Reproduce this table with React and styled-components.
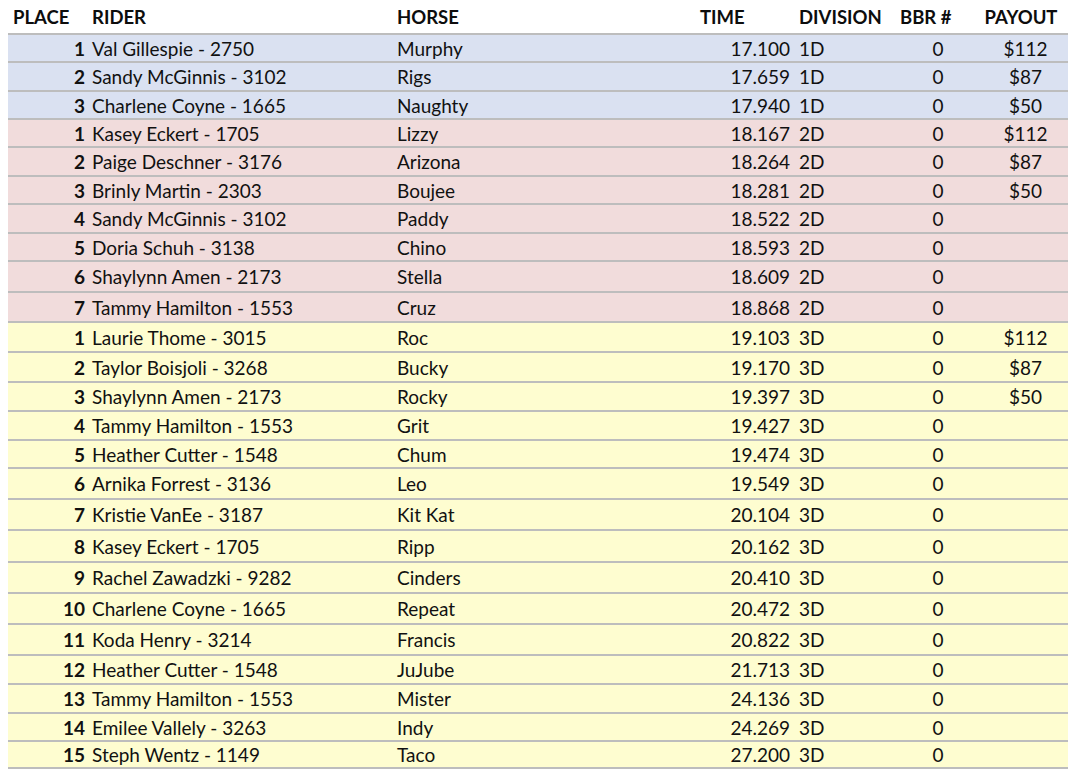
import React from 'react';
import styled, { createGlobalStyle } from 'styled-components';

const GlobalStyle = createGlobalStyle`
  html, body {
    margin: 0;
    padding: 0;
    background: #ffffff;
  }
  body {
    font-family: Lato, "Open Sans", "Liberation Sans", sans-serif;
    color: #111111;
  }
`;

const groupColors = {
  '1D': '#dae1f1',
  '2D': '#f1dcdc',
  '3D': '#fefdd0',
};

// row heights in px (border included), read from the reference
const rows = [
  [1, 'Val Gillespie - 2750', 'Murphy', '17.100', '1D', '$112', 28],
  [2, 'Sandy McGinnis - 3102', 'Rigs', '17.659', '1D', '$87', 29],
  [3, 'Charlene Coyne - 1665', 'Naughty', '17.940', '1D', '$50', 28],
  [1, 'Kasey Eckert - 1705', 'Lizzy', '18.167', '2D', '$112', 28],
  [2, 'Paige Deschner - 3176', 'Arizona', '18.264', '2D', '$87', 29],
  [3, 'Brinly Martin - 2303', 'Boujee', '18.281', '2D', '$50', 28],
  [4, 'Sandy McGinnis - 3102', 'Paddy', '18.522', '2D', '', 29],
  [5, 'Doria Schuh - 3138', 'Chino', '18.593', '2D', '', 28],
  [6, 'Shaylynn Amen - 2173', 'Stella', '18.609', '2D', '', 31],
  [7, 'Tammy Hamilton - 1553', 'Cruz', '18.868', '2D', '', 30],
  [1, 'Laurie Thome - 3015', 'Roc', '19.103', '3D', '$112', 30],
  [2, 'Taylor Boisjoli - 3268', 'Bucky', '19.170', '3D', '$87', 30],
  [3, 'Shaylynn Amen - 2173', 'Rocky', '19.397', '3D', '$50', 29],
  [4, 'Tammy Hamilton - 1553', 'Grit', '19.427', '3D', '', 29],
  [5, 'Heather Cutter - 1548', 'Chum', '19.474', '3D', '', 28],
  [6, 'Arnika Forrest - 3136', 'Leo', '19.549', '3D', '', 31],
  [7, 'Kristie VanEe - 3187', 'Kit Kat', '20.104', '3D', '', 31],
  [8, 'Kasey Eckert - 1705', 'Ripp', '20.162', '3D', '', 32],
  [9, 'Rachel Zawadzki - 9282', 'Cinders', '20.410', '3D', '', 31],
  [10, 'Charlene Coyne - 1665', 'Repeat', '20.472', '3D', '', 31],
  [11, 'Koda Henry - 3214', 'Francis', '20.822', '3D', '', 31],
  [12, 'Heather Cutter - 1548', 'JuJube', '21.713', '3D', '', 29],
  [13, 'Tammy Hamilton - 1553', 'Mister', '24.136', '3D', '', 29],
  [14, 'Emilee Vallely - 3263', 'Indy', '24.269', '3D', '', 28],
  [15, 'Steph Wentz - 1149', 'Taco', '27.200', '3D', '', 27],
];

const App = () => (
  <>
    <GlobalStyle />
    <Sheet>
      <HeaderRow>
        <HeadCell>PLACE</HeadCell>
        <HeadCell $pad="4px">RIDER</HeadCell>
        <HeadCell $pad="4px">HORSE</HeadCell>
        <HeadCell $pad="4px">TIME</HeadCell>
        <HeadCell $pad="5px">DIVISION</HeadCell>
        <HeadCell $pad="4px">BBR #</HeadCell>
        <HeadCell $pad="0" $align="center">PAYOUT</HeadCell>
      </HeaderRow>

      {rows.map(([place, rider, horse, time, div, payout, h], key) => (
        <Row key={key} $bg={groupColors[div]} $h={h}>
          <PlaceCell>{place}</PlaceCell>
          <TextCell>{rider}</TextCell>
          <TextCell>{horse}</TextCell>
          <TimeCell>{time}</TimeCell>
          <TextCell $pad="5px">{div}</TextCell>
          <CenterCell>0</CenterCell>
          <CenterCell $shift="3px">{payout}</CenterCell>
        </Row>
      ))}
    </Sheet>
  </>
);

const columns = '80px 305px 303px 98px 102px 84px 88px';

const Sheet = styled.div`
  width: 1060px;
  padding-left: 8px;
  font-size: 19px;
`;

const HeaderRow = styled.div`
  display: grid;
  grid-template-columns: ${columns};
  height: 35px;
  box-sizing: border-box;
  padding-top: 1px;
  align-items: center;
  border-bottom: 2px solid #bdbdbd;
  font-size: 18.5px;
`;

const HeadCell = styled.div`
  font-weight: 700;
  color: #0d0d0d;
  padding-left: ${({ $pad }) => $pad || '5px'};
  padding-right: ${({ $align }) => ($align === 'center' ? '6px' : '0')};
  text-align: ${({ $align }) => $align || 'left'};
  white-space: nowrap;
`;

const Row = styled.div`
  display: grid;
  grid-template-columns: ${columns};
  height: ${({ $h }) => $h}px;
  box-sizing: border-box;
  align-items: center;
  background: ${({ $bg }) => $bg};
  border-bottom: 2px solid #bdbdbd;
`;

const PlaceCell = styled.div`
  font-weight: 700;
  text-align: right;
  padding-right: 3px;
`;

const TextCell = styled.div`
  padding-left: ${({ $pad }) => $pad || '4px'};
  white-space: nowrap;
`;

const TimeCell = styled.div`
  text-align: right;
  padding-right: 4px;
`;

const CenterCell = styled.div`
  text-align: center;
  padding-left: ${({ $shift }) => $shift || '0'};
`;

export default App;
